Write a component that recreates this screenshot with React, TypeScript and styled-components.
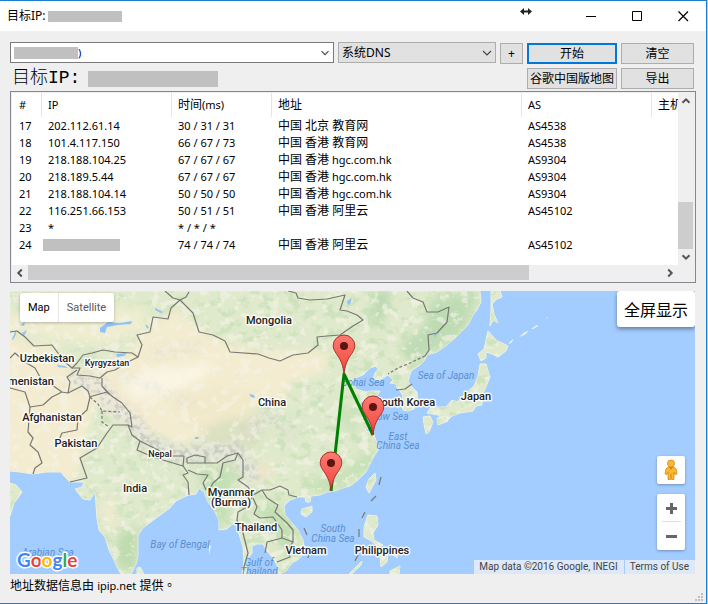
import React from "react";
import styled, { createGlobalStyle } from "styled-components";

const GlobalStyle = createGlobalStyle`
  *, *::before, *::after { box-sizing: border-box; }
  body {
    margin: 0;
    background: #b4d0ea;
    color: #000;
    font: 12px/16px "Noto Sans", "Noto Sans CJK SC", sans-serif;
  }
  button, input, select { font: inherit; color: inherit; margin: 0; padding: 0; }
`;

const AppWindow = styled.div`
  display: flex;
  flex-direction: column;
  min-height: 100vh;
  margin-right: 1px;
  background: #efefef;
  border: 1px solid #1a7fd0;
  border-left: 0;
`;

const TitleBar = styled.header`
  position: relative;
  display: flex;
  align-items: center;
  height: 30px;
  padding-left: 7px;
  background: #fff;
`;

const Title = styled.h1`
  flex: 1;
  display: flex;
  align-items: center;
  gap: 2px;
  margin: 0;
  font-size: 12px;
  font-weight: 400;
`;

const Redacted = styled.span<{ $w: number; $h: number }>`
  flex: none;
  display: inline-block;
  width: ${(p) => p.$w}px;
  height: ${(p) => p.$h}px;
  background: #c0c0c0;
`;

const CaptionButton = styled.button`
  display: grid;
  place-items: center;
  width: 46px;
  height: 30px;
  border: 0;
  background: none;
`;

const ResizeCursor = styled.svg`
  position: absolute;
  top: 5px;
  right: 174px;
`;

const Content = styled.main`
  flex: 1;
  display: flex;
  flex-direction: column;
  padding: 11px 10px 0;
`;

const Toolbar = styled.div`
  display: grid;
  grid-template-columns: minmax(0, 1fr) 158px 23px 90px 73px;
  grid-template-rows: 22px 21px;
  gap: 4px;
  padding-right: 2px;
  margin-bottom: 2px;
`;

const Combo = styled.div`
  display: flex;
  align-items: center;
  height: 21px;
  padding-left: 3px;
  border: 1px solid #7a7a7a;
  background: #fff;
`;

const HostInput = styled.input`
  flex: 1;
  min-width: 0;
  height: 19px;
  border: 0;
  outline: 0;
  background: none;
  color: #000080;
  font-size: 11px;
`;

const ComboArrow = styled.button`
  display: grid;
  place-items: center;
  width: 16px;
  height: 19px;
  border: 0;
  background: none;
`;

const SelectBox = styled.label`
  position: relative;
  display: block;
  height: 21px;
`;

const Select = styled.select`
  width: 100%;
  height: 21px;
  padding-left: 3px;
  appearance: none;
  border: 1px solid #adadad;
  border-radius: 0;
  background: #e1e1e1;
  font-size: 12px;
`;

const SelectArrow = styled.svg`
  position: absolute;
  top: 8px;
  right: 4px;
  pointer-events: none;
`;

const PushButton = styled.button<{ $primary?: boolean }>`
  align-self: end;
  height: 21px;
  border: ${(p) => (p.$primary ? "2px solid #0078d7" : "1px solid #adadad")};
  background: #e1e1e1;
  font-size: 12px;
  line-height: 16px;
  white-space: nowrap;
`;

const TargetLabel = styled.div`
  grid-column: 1 / 4;
  display: flex;
  align-items: center;
  gap: 8px;
  padding-left: 2px;
  font: 300 18px/21px "Liberation Mono", "Noto Sans CJK SC", monospace;
`;

const ListFrame = styled.section`
  display: grid;
  grid-template-columns: minmax(0, 1fr) 15px;
  grid-template-rows: auto 15px;
  padding: 1px 2px 2px 1px;
  border: 1px solid #828790;
  background: #efefef;
  margin-bottom: 8px;
`;

const ListView = styled.div`
  height: 172px;
  overflow: hidden;
  background: #fff;
`;

const Table = styled.table`
  table-layout: fixed;
  width: 742px;
  border-collapse: separate;
  border-spacing: 0;
  font-size: 11px;
  line-height: 16px;
`;

const Head = styled.th`
  height: 24px;
  padding: 0 0 0 6px;
  border-right: 1px solid #e5e5e5;
  text-align: left;
  font-weight: 400;
  white-space: nowrap;

  &:first-child { padding-left: 7px; }
`;

const Cell = styled.td`
  height: 17px;
  padding: 0 0 0 6px;
  white-space: nowrap;

  &:first-child { padding-left: 7px; }
`;

const HiddenCell = styled(Cell)`
  padding-left: 1px;
  line-height: 0;
`;

const Han = styled.span`
  font-size: 12px;
`;

const ScrollBar = styled.div<{ $dir: "row" | "column" }>`
  display: flex;
  flex-direction: ${(p) => p.$dir};
  background: #efefef;
`;

const ScrollArrow = styled.button`
  display: grid;
  place-items: center;
  flex: none;
  width: 16px;
  height: 16px;
  border: 0;
  background: none;
`;

const Thumb = styled.div<{ $grow: number }>`
  flex: ${(p) => p.$grow} 1 0;
  background: #cdcdcd;
`;

const Gap = styled.div<{ $grow: number }>`
  flex: ${(p) => p.$grow} 1 0;
`;

const MapPanel = styled.section`
  position: relative;
  flex: 1;
  min-height: 283px;
  margin-right: 1px;
  overflow: hidden;
  background: #a3ccff;
  font-family: Roboto, sans-serif;
`;

const MapCanvas = styled.svg`
  position: absolute;
  inset: 0;
  width: 100%;
  height: 100%;
`;

const MapTypes = styled.div`
  position: absolute;
  top: 2px;
  left: 10px;
  display: flex;
  height: 29px;
  border-radius: 2px;
  background: #fff;
  box-shadow: 0 1px 3px rgba(0, 0, 0, 0.25);
`;

const MapType = styled.button<{ $active?: boolean }>`
  padding: 0 8px;
  border: 0;
  background: none;
  color: ${(p) => (p.$active ? "#000" : "#565656")};
  font-size: 11px;

  & + & { border-left: 1px solid #e6e6e6; }
`;

const FullScreen = styled.button`
  position: absolute;
  top: 0;
  right: 0;
  height: 36px;
  padding: 0 7px;
  border: 0;
  border-radius: 3px;
  background: #fff;
  box-shadow: 0 2px 4px rgba(0, 0, 0, 0.4);
  font: 16px/24px "Noto Sans CJK SC", sans-serif;
`;

const MapControls = styled.div`
  position: absolute;
  right: 10px;
  bottom: 24px;
  display: flex;
  flex-direction: column;
  gap: 10px;
`;

const ControlCard = styled.div`
  width: 28px;
  border-radius: 2px;
  background: #fff;
  box-shadow: 0 1px 3px rgba(0, 0, 0, 0.3);
`;

const ControlButton = styled.button`
  display: grid;
  place-items: center;
  width: 28px;
  height: 28px;
  border: 0;
  background: none;
`;

const ControlRule = styled.hr`
  width: 19px;
  height: 1px;
  margin: -1px auto 0;
  border: 0;
  background: #e0e0e0;
`;

const Attribution = styled.div`
  position: absolute;
  right: 0;
  bottom: 0;
  display: flex;
  gap: 1px;
  color: #444;
  font-size: 10px;
  line-height: 14px;
`;

const Credit = styled.span`
  padding: 0 6px 0 5px;
  background: rgba(245, 245, 245, 0.7);
`;

const CreditLink = styled.a`
  padding: 0 6px 0 5px;
  background: rgba(245, 245, 245, 0.7);
  color: inherit;
  text-decoration: none;
`;

const GoogleLogo = styled.svg`
  position: absolute;
  left: 5px;
  bottom: 0;
`;

const StatusBar = styled.footer`
  display: flex;
  justify-content: space-between;
  height: 29px;
  padding: 4px 3px 2px 10px;
  font-family: "Noto Sans", "Noto Sans CJK TC", sans-serif;
`;

const Small = styled.span`
  font-size: 11px;
`;

const Grip = styled.svg`
  align-self: flex-end;
`;

type Hop = { n: number; ip: string; time: string; place: string; org?: string; as: string };

const hops: Hop[] = [
  { n: 17, ip: "202.112.61.14", time: "30 / 31 / 31", place: "中国 北京 教育网", as: "AS4538" },
  { n: 18, ip: "101.4.117.150", time: "66 / 67 / 73", place: "中国 香港 教育网", as: "AS4538" },
  { n: 19, ip: "218.188.104.25", time: "67 / 67 / 67", place: "中国 香港", org: "hgc.com.hk", as: "AS9304" },
  { n: 20, ip: "218.189.5.44", time: "67 / 67 / 67", place: "中国 香港", org: "hgc.com.hk", as: "AS9304" },
  { n: 21, ip: "218.188.104.14", time: "50 / 50 / 50", place: "中国 香港", org: "hgc.com.hk", as: "AS9304" },
  { n: 22, ip: "116.251.66.153", time: "50 / 51 / 51", place: "中国 香港 阿里云", as: "AS45102" },
  { n: 23, ip: "*", time: "* / * / *", place: "", as: "" },
  { n: 24, ip: "", time: "74 / 74 / 74", place: "中国 香港 阿里云", as: "AS45102" },
];

function Chevron({ angle, bold }: { angle: number; bold?: boolean }) {
  return (
    <svg width="10" height="10" viewBox="0 0 10 10" aria-hidden="true">
      <path
        d="M1.5 3.2 5 6.7 8.5 3.2"
        transform={`rotate(${angle} 5 5)`}
        fill="none"
        stroke={bold ? "#555" : "#444"}
        strokeWidth={bold ? 2 : 1.1}
      />
    </svg>
  );
}

const landShapes = [
  "M10 291H480L481 302 477 310 473 315 468 325 463 330 455 338 447 345 437 352 427 355 424 361 420 365 412 370 410 374 408 382 412 387 417 392 418 403 414 409 408 411 403 410 402 402 403 396 400 391 397 388 396 384 390 383 393 380 388 375 380 380 373 379 375 373 378 369 376 366 370 368 363 375 355 378 352 382 356 389 362 391 366 392 371 391 380 391 377 396 368 399 361 402 358 407 364 417 370 427 365 430 374 434 375 438 377 443 379 449 374 456 370 464 366 472 358 480 350 486 343 488 335 491 327 492 320 495 311 496 310 502 306 502 305 497 298 497 290 500 284 506 285 515 292 523 298 530 303 540 305 553 299 559 292 563 286 571 279 574 277 565 272 557 267 551 263 544 257 544 252 546 252 553 247 560 246 574 242 574 244 560 243 547 239 534 236 523 231 525 227 529 219 530 219 520 214 510 208 502 204 492 199 488 196 494 189 495 184 497 176 501 170 508 163 513 152 521 143 528 138 535 138 556 136 564 131 574H121L117 567 114 560 109 550 105 537 99 530 97 519 96 505 95 492 90 500 83 499 75 489 82 487 84 482 70 482 64 476 61 472 47 472 33 474 20 472 10 471Z",
  "M10 483 16 485 22 492 18 498 14 503 10 516Z",
  "M137 568 140 567 144 574H137Z",
  "M491 291H500L502 297 497 299 492 304 494 314 498 323 493 320 490 326 491 310Z",
  "M488 331 496 340 508 346 506 351 498 357 492 354 486 352 486 358 481 361 478 354 484 349Z",
  "M480 364 486 364 490 377 486 387 482 395 482 405 476 406 473 411 460 413 452 416 446 422 438 415 427 413 431 407 446 407 452 400 457 402 465 394 474 386 478 376Z",
  "M423 417 430 416 433 422 429 432 426 434 424 424Z",
  "M437 418 447 416 448 421 438 425Z",
  "M375 473 376 480 369 493 366 487 369 479Z",
  "M302 509 312 506 312 512 306 517 301 514Z",
  "M368 515 377 516 378 525 373 533 374 540 383 545 379 547 370 540 364 537 364 527Z",
  "M349 574 362 561 361 565 352 574Z",
  "M372 545 378 547 376 553Z",
  "M380 556 388 553 387 562 381 567Z",
  "M391 547 398 550 397 558 391 553Z",
  "M390 571 400 566 399 574H390Z",
];

const landPath = landShapes.join("");

const borders = [
  "10,332 17,331 25,337 34,346 52,345 58,353 65,362 72,368 77,363 83,355 92,353 103,350 115,352 132,353 138,357 142,345 137,335 150,332 153,317 168,319 171,308 180,300 173,298 165,291",
  "180,300 193,313 199,332 213,335 225,341 230,352 258,354 269,358 280,361 293,355 308,353 318,345 317,337 327,336 340,335 353,326 363,320 357,315 347,311 340,310 345,295 327,299 310,300 298,298 296,293 288,291",
  "180,300 186,297 189,292",
  "407,291 413,298 423,302 427,312 438,312 449,307 447,322 437,333 428,335 429,350 425,356",
  "396,390 405,389 412,384",
  "72,368 80,368 77,375 90,376 100,378 107,372 115,370 128,362 138,357",
  "10,358 15,353 25,362 35,368 40,377 52,385 62,392 68,393 70,382 67,377 77,370",
  "10,388 25,392 30,407 43,405 52,397 62,392",
  "30,407 28,432 33,438 30,445 38,452 42,463 35,468 33,474",
  "68,393 82,386 88,391 90,397 87,410 78,418 77,430 62,433 57,445",
  "89,397 107,392 113,397 122,403 130,413 132,427 128,425 113,425 107,433 97,448 80,458 87,478 70,482",
  "102,378 102,386 109,394",
  "128,425 132,435 140,441 152,447 170,456 184,456 183,466 153,457 137,450 140,441",
  "187,463 205,463 217,463 227,456 238,453 243,460 243,477 238,480 248,487 253,495",
  "187,463 187,458 195,455 205,457 205,463",
  "238,453 235,460 223,463 220,477 213,483 208,492",
  "183,466 188,473 183,475 188,482 189,495",
  "188,470 197,474 208,475 203,483 206,490",
  "253,495 262,490 270,490 280,486 288,490 289,495 297,497",
  "262,490 267,498 278,505 275,512 287,523 293,530 293,542 287,550 290,557 277,562",
  "253,498 257,507 254,514 260,518 273,517 282,530 282,538 267,542 265,553",
  "282,538 293,542",
  "253,495 247,507 238,512 237,520 243,533 248,553 243,570",
];

const countryLabels: [string, number, number][] = [
  ["Mongolia", 269, 324],
  ["Uzbekistan", 47, 362],
  ["menistan", 31, 385],
  ["Afghanistan", 52, 421],
  ["Pakistan", 76, 447],
  ["China", 272, 406],
  ["South Korea", 405, 406],
  ["Japan", 476, 400],
  ["India", 135, 492],
  ["Myanmar", 231, 496],
  ["(Burma)", 231, 506],
  ["Thailand", 256, 531],
  ["Vietnam", 306, 554],
  ["Philippines", 382, 554],
];

const seaLabels: [string, number, number][] = [
  ["Bohai Sea", 363, 386],
  ["Sea of Japan", 446, 379],
  ["Yellow Sea", 385, 420],
  ["East", 398, 440],
  ["China Sea", 398, 449],
  ["South", 333, 532],
  ["China Sea", 333, 542],
  ["Bay of Bengal", 180, 548],
  ["Gulf of", 259, 566],
  ["Thailand", 259, 575],
  ["Arabian Sea", 48, 556],
];

const pins: [number, number][] = [
  [344, 374],
  [373, 435],
  [331, 491],
];

function RouteMap() {
  return (
    <MapCanvas viewBox="10 291 685 283" preserveAspectRatio="xMidYMid slice" role="img" aria-label="Route map">
      <defs>
        <clipPath id="land">
          <path d={landPath} />
        </clipPath>
        <filter id="soft" x="-20%" y="-20%" width="140%" height="140%">
          <feGaussianBlur stdDeviation="5" />
        </filter>
        <filter id="paleGround" x="0" y="0" width="100%" height="100%" colorInterpolationFilters="sRGB">
          <feTurbulence type="fractalNoise" baseFrequency="0.1 0.12" numOctaves="4" seed="4" />
          <feColorMatrix values="0 0 0 0 0.96  0 0 0 0 0.955  0 0 0 0 0.9  9 0 0 0 -5" />
        </filter>
        <filter id="forest" x="0" y="0" width="100%" height="100%" colorInterpolationFilters="sRGB">
          <feTurbulence type="fractalNoise" baseFrequency="0.08 0.11" numOctaves="4" seed="12" />
          <feColorMatrix values="0 0 0 0 0.73  0 0 0 0 0.86  0 0 0 0 0.68  0 8 0 0 -4.4" />
        </filter>
        <filter id="rock" x="0" y="0" width="100%" height="100%" colorInterpolationFilters="sRGB">
          <feTurbulence type="fractalNoise" baseFrequency="0.2" numOctaves="3" seed="7" />
          <feColorMatrix values="0 0 0 0 0.74  0 0 0 0 0.74  0 0 0 0 0.72  0 0 6 0 -2.8" />
        </filter>
        <mask id="mountains">
          <g filter="url(#soft)" fill="none" stroke="#fff" strokeLinecap="round">
            <path d="M75 380 100 385 112 405 130 418 150 445 180 455 235 450 252 475" strokeWidth="14" />
            <path d="M250 430 270 415 290 430" strokeWidth="12" opacity=".5" />
            <path d="M150 355 200 345M120 375 190 402" strokeWidth="6" opacity=".4" />
          </g>
        </mask>
        <linearGradient id="pin" x1="0" y1="0" x2="0" y2="1">
          <stop offset="0" stopColor="#fc7b72" />
          <stop offset=".7" stopColor="#f6544b" />
          <stop offset="1" stopColor="#d93a30" />
        </linearGradient>
        <g id="marker">
          <path
            d="M0 0C-1-9-3-13-6-18-9-22-10.800-25-10.800-28.200A10.800 10.800 0 0 1 10.800-28.200C10.800-25 9-22 6-18 3-13 1-9 0 0Z"
            fill="url(#pin)"
            stroke="#a5342d"
          />
          <circle cy="-28" r="4" fill="#5c1510" />
        </g>
      </defs>

      <rect x="10" y="291" width="685" height="283" fill="#a3ccff" />
      <path d={landPath} fill="#dfe9cb" stroke="#edf1df" strokeWidth="1" />
      <g clipPath="url(#land)">
        <rect x="200" y="291" width="310" height="283" filter="url(#forest)" opacity=".45" />
        <rect x="10" y="291" width="190" height="283" filter="url(#forest)" opacity=".35" />
        <g filter="url(#soft)">
          <path d="M0 335 60 350 75 372 125 355 145 330 175 310 210 335 250 350 330 352 325 372 285 385 290 400 260 400 235 430 180 445 130 425 95 400 85 450 75 480 0 480Z" fill="#f4ecd0" />
          <path d="M0 312 60 312 140 305 150 325 110 345 50 340 0 325Z" fill="#efedd0" />
          <path d="M125 383 145 370 180 368 215 362 200 378 165 396 132 398Z" fill="#fbf6e4" />
          <path d="M170 405 215 385 265 395 240 425 190 430Z" fill="#f2e9cb" />
          <path d="M200 430 230 418 265 420 255 450 215 450Z" fill="#dbe1c1" />
          <path d="M375 291H392L382 322 372 328Z" fill="#b9d8b0" />
          <path d="M400 345 425 325 430 300 480 291 462 335 410 365Z" fill="#bedbb4" />
          <path d="M118 535 138 525 138 560 126 574 115 560Z" fill="#bedcae" />
          <path d="M195 470 235 465 228 522 215 525 205 490Z" fill="#c3dfb4" />
          <path d="M250 505 275 500 300 535 290 560 265 520Z" fill="#c3dfb4" />
          <path d="M300 483 340 472 375 445 375 465 325 495Z" fill="#c6e1b6" />
          <path d="M248 470 270 460 276 474 262 480Z" fill="#f0e7ca" />
          <path d="M332 410 345 400 360 425 350 435Z" fill="#cbe2bb" />
          <path d="M100 500 112 498 118 525 108 530Z" fill="#f0eccf" />
        </g>
        <rect x="10" y="291" width="500" height="283" filter="url(#paleGround)" opacity=".6" />
        <g mask="url(#mountains)">
          <rect x="10" y="291" width="500" height="283" fill="#e6e6e0" opacity=".7" />
          <rect x="10" y="291" width="500" height="283" filter="url(#rock)" opacity=".7" />
        </g>
        <g fill="#8fc1fb">
          <path d="M100 328 108 322 120 323 132 321 131 324 118 325 107 327 105 333 100 332Z" />
          <path d="M116 354 127 353 124 356 117 357Z" />
          <path d="M12 339 16 330 16 334 13 340ZM20 325 25 322 24 326ZM22 333 27 330 24 336Z" />
          <path d="M155 308 163 312 161 313 155 310ZM145 324 149 327 147 329Z" />
          <path d="M347 301 352 298 350 304 348 305ZM249 394 254 395 255 398 251 397ZM434 334 437 334 435 338Z" />
          <path d="M57 365 65 366 68 368 58 367ZM195 437 199 437 198 439 195 439Z" />
        </g>
      </g>
      <g fill="#f4f6ec">
        <path d="M508 344 512 340 514 339 511 343ZM519 337 525 332 529 331 524 335ZM531 329 537 325 538 326 533 329ZM546 318 548 317 547 319ZM209 545 211 546 209 555Z" />
      </g>

      <g fill="none" stroke="#777972" strokeWidth="1.200" strokeLinejoin="round">
        {borders.map((points) => (
          <polyline key={points} points={points} />
        ))}
        <path strokeDasharray="3 2" d="M425 356 410 363 398 368 388 374M90 397 98 404 102 411 120 412M102 411 102 422 109 427" />
        <path d="M381 477 379 485M376 496 371 501M365 512 362 518M359 529V537M304 528 307 535M358 555 355 561M309 553 308 558" />
      </g>

      <g
        fill="#5a90d0"
        fontFamily="Roboto, sans-serif"
        fontSize="10"
        fontStyle="italic"
        textAnchor="middle"
      >
        {seaLabels.map(([name, x, y]) => (
          <text key={name + y} x={x} y={y}>{name}</text>
        ))}
      </g>
      <g
        fill="#222"
        stroke="#fff"
        strokeOpacity=".85"
        strokeWidth="3"
        strokeLinejoin="round"
        paintOrder="stroke"
        fontFamily="Roboto, sans-serif"
        fontSize="11"
        fontWeight="500"
        textAnchor="middle"
      >
        {countryLabels.map(([name, x, y]) => (
          <text key={name} x={x} y={y}>{name}</text>
        ))}
        <text x="107" y="366" fontSize="9">Kyrgyzstan</text>
        <text x="160" y="457" fontSize="9">Nepal</text>
      </g>

      <path d="M331 491 344 374 373 435" fill="none" stroke="#008000" strokeWidth="3" strokeLinejoin="round" />
      {pins.map(([x, y]) => (
        <use key={x} href="#marker" x={x} y={y} />
      ))}
    </MapCanvas>
  );
}

export default function App() {
  return (
    <>
      <GlobalStyle />
      <AppWindow>
        <TitleBar>
          <Title>
            目标IP: <Redacted $w={74} $h={11} />
          </Title>
          <ResizeCursor width="12" height="11" viewBox="0 0 12 11" aria-hidden="true">
            <path d="M0 5.500 4 2V4.500H8V2L12 5.500 8 9V6.500H4V9Z" fill="#222" />
          </ResizeCursor>
          <CaptionButton aria-label="Minimize">
            <svg width="11" height="11"><path d="M0 5.500H10" stroke="#000" /></svg>
          </CaptionButton>
          <CaptionButton aria-label="Maximize">
            <svg width="11" height="11"><path d="M.5.5H9.500V9.500H.5Z" fill="none" stroke="#000" /></svg>
          </CaptionButton>
          <CaptionButton aria-label="Close">
            <svg width="11" height="11"><path d="M.5.5 10 10M10 .5.5 10" stroke="#000" strokeWidth="1.200" /></svg>
          </CaptionButton>
        </TitleBar>

        <Content>
          <Toolbar>
            <Combo>
              <Redacted $w={64} $h={12} />
              <HostInput aria-label="目标" defaultValue=")" />
              <ComboArrow aria-label="历史记录"><Chevron angle={0} /></ComboArrow>
            </Combo>
            <SelectBox>
              <Select aria-label="DNS" defaultValue="系统DNS">
                <option>系统DNS</option>
              </Select>
              <SelectArrow width="10" height="6" viewBox="0 0 10 6" aria-hidden="true">
                <path d="M1 1 5 5 9 1" fill="none" stroke="#444" strokeWidth="1.100" />
              </SelectArrow>
            </SelectBox>
            <PushButton>+</PushButton>
            <PushButton $primary>开始</PushButton>
            <PushButton>清空</PushButton>
            <TargetLabel>
              目标IP: <Redacted $w={130} $h={16} />
            </TargetLabel>
            <PushButton>谷歌中国版地图</PushButton>
            <PushButton>导出</PushButton>
          </Toolbar>

          <ListFrame>
            <ListView>
              <Table>
                <colgroup>
                  <col width="30" />
                  <col width="130" />
                  <col width="100" />
                  <col width="250" />
                  <col width="130" />
                  <col width="102" />
                </colgroup>
                <thead>
                  <tr>
                    <Head>#</Head>
                    <Head>IP</Head>
                    <Head><Han>时间</Han>(ms)</Head>
                    <Head><Han>地址</Han></Head>
                    <Head>AS</Head>
                    <Head><Han>主机</Han></Head>
                  </tr>
                </thead>
                <tbody>
                  {hops.map((hop) => (
                    <tr key={hop.n}>
                      <Cell>{hop.n}</Cell>
                      {hop.ip ? <Cell>{hop.ip}</Cell> : <HiddenCell><Redacted $w={77} $h={12} /></HiddenCell>}
                      <Cell>{hop.time}</Cell>
                      <Cell><Han>{hop.place}</Han>{hop.org && ` ${hop.org}`}</Cell>
                      <Cell>{hop.as}</Cell>
                      <Cell />
                    </tr>
                  ))}
                </tbody>
              </Table>
            </ListView>
            <ScrollBar $dir="column">
              <ScrollArrow aria-label="Up"><Chevron angle={180} bold /></ScrollArrow>
              <Gap $grow={92} />
              <Thumb $grow={46} />
              <ScrollArrow aria-label="Down"><Chevron angle={0} bold /></ScrollArrow>
            </ScrollBar>
            <ScrollBar $dir="row">
              <ScrollArrow aria-label="Left"><Chevron angle={90} bold /></ScrollArrow>
              <Thumb $grow={500} />
              <Gap $grow={133} />
              <ScrollArrow aria-label="Right"><Chevron angle={-90} bold /></ScrollArrow>
            </ScrollBar>
          </ListFrame>

          <MapPanel>
            <RouteMap />
            <MapTypes>
              <MapType $active>Map</MapType>
              <MapType>Satellite</MapType>
            </MapTypes>
            <FullScreen>全屏显示</FullScreen>
            <GoogleLogo width="68" height="28" viewBox="0 0 68 28" role="img" aria-label="Google">
              <text
                x="2"
                y="21"
                fontFamily="Lato, sans-serif"
                fontSize="19"
                fontWeight="700"
                stroke="#fff"
                strokeWidth="3"
                strokeLinejoin="round"
                paintOrder="stroke"
              >
                <tspan fill="#4285f4">G</tspan>
                <tspan fill="#ea4335">o</tspan>
                <tspan fill="#fbbc05">o</tspan>
                <tspan fill="#4285f4">g</tspan>
                <tspan fill="#34a853">l</tspan>
                <tspan fill="#ea4335">e</tspan>
              </text>
            </GoogleLogo>
            <MapControls>
              <ControlCard>
                <ControlButton aria-label="Street View">
                  <svg width="14" height="22" viewBox="0 0 14 22">
                    <path
                      d="M4 8 2 10 1 15 3 15.500 4 13V20.500H6.500L7 15 7.500 20.500H10V13L11 15.500 13 15 12 10 10 8Z"
                      fill="#fbb829"
                      stroke="#d78b1a"
                      strokeWidth=".8"
                    />
                    <circle cx="7" cy="4.500" r="3.500" fill="#fbb829" stroke="#d08a20" strokeWidth=".8" />
                    <path d="M5 8 7 11 9 8Z" fill="#dd7f22" />
                  </svg>
                </ControlButton>
              </ControlCard>
              <ControlCard>
                <ControlButton aria-label="Zoom in">
                  <svg width="11" height="11"><path d="M0 5.500H11M5.500 0V11" stroke="#666" strokeWidth="3" /></svg>
                </ControlButton>
                <ControlRule />
                <ControlButton aria-label="Zoom out">
                  <svg width="11" height="11"><path d="M0 5.500H11" stroke="#666" strokeWidth="3" /></svg>
                </ControlButton>
              </ControlCard>
            </MapControls>
            <Attribution>
              <Credit>Map data ©2016 Google, INEGI</Credit>
              <CreditLink href="#terms">Terms of Use</CreditLink>
            </Attribution>
          </MapPanel>
        </Content>

        <StatusBar>
          <span>地址数据信息由 <Small>ipip.net</Small> 提供。</span>
          <Grip width="8" height="8" viewBox="0 0 8 8" aria-hidden="true">
            <path d="M6 0H8V2H6ZM3 3H5V5H3ZM6 3H8V5H6ZM0 6H2V8H0ZM3 6H5V8H3ZM6 6H8V8H6Z" fill="#bfbfbf" />
          </Grip>
        </StatusBar>
      </AppWindow>
    </>
  );
}
